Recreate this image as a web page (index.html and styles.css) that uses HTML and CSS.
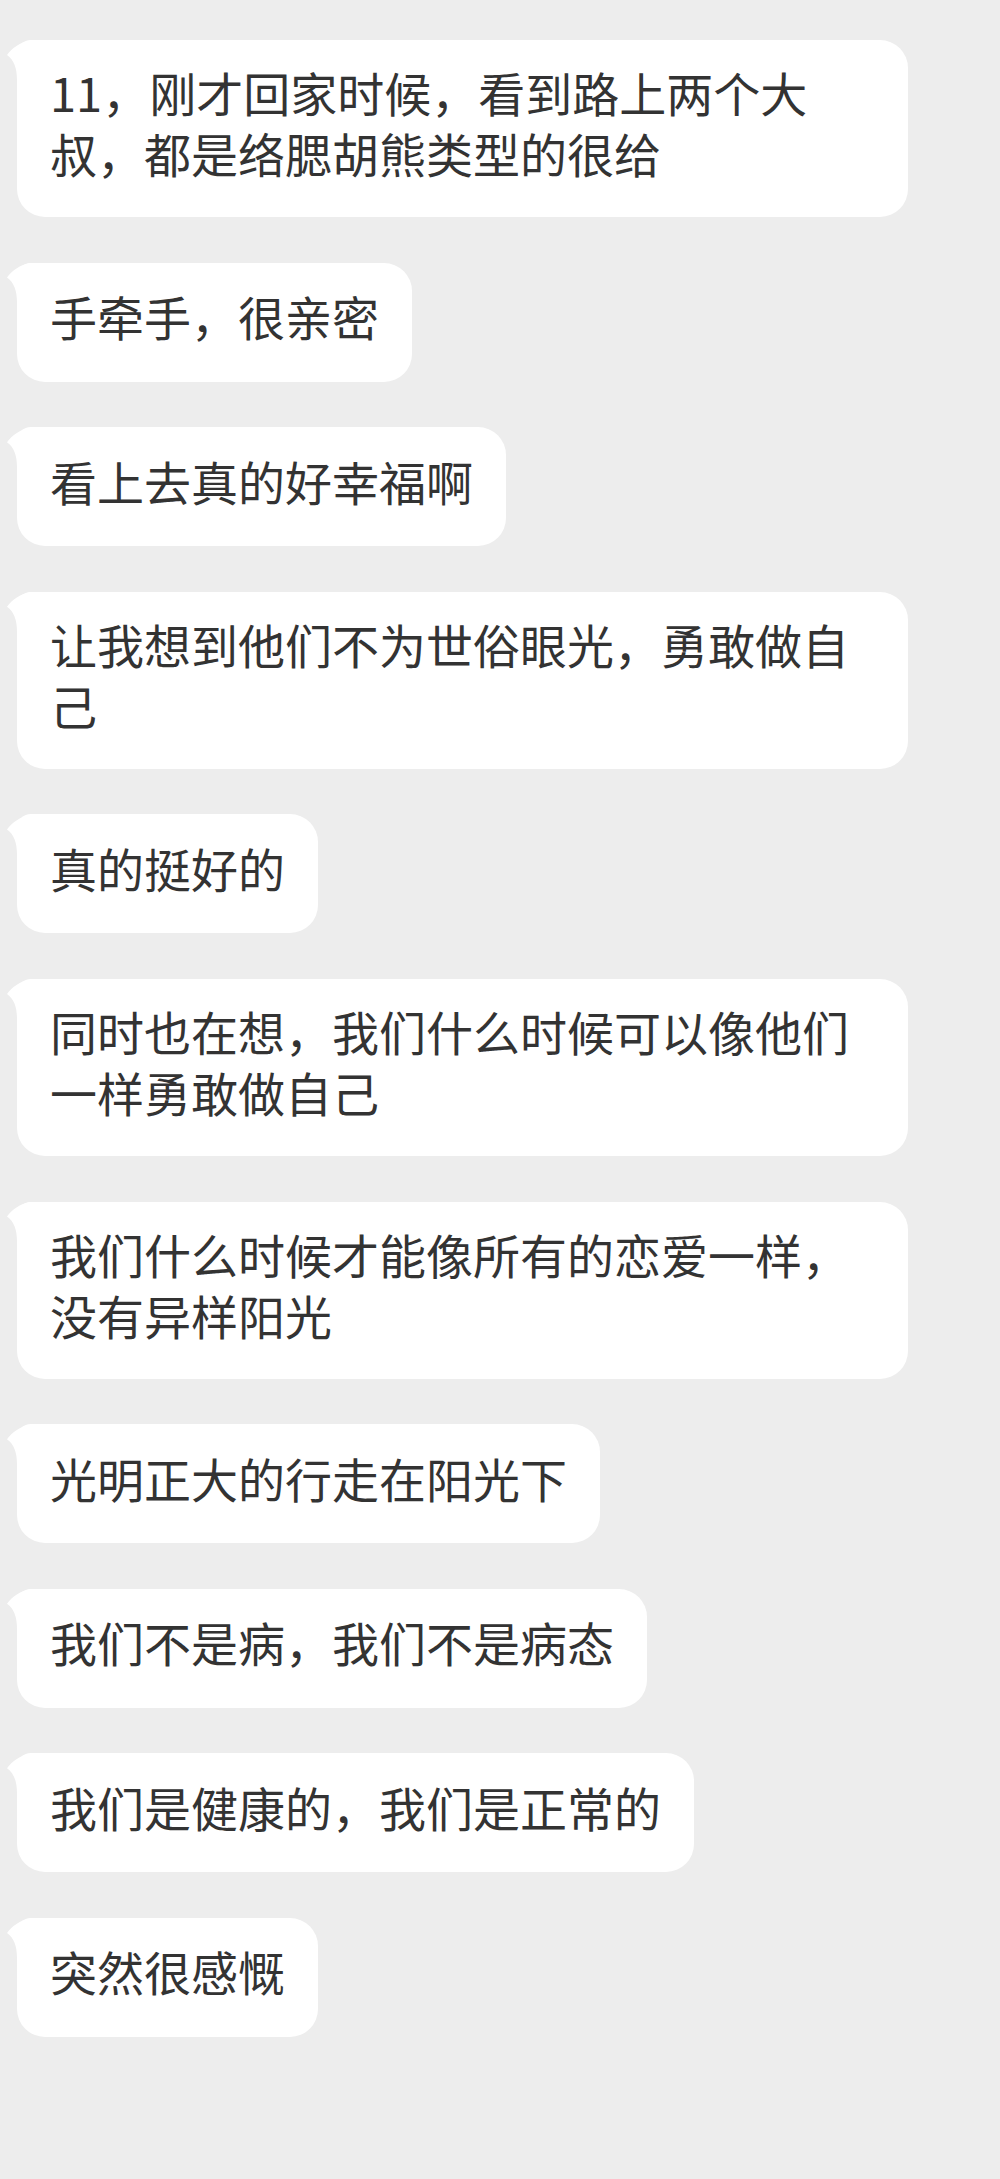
FILE: index.html
```html
<!DOCTYPE html>
<html lang="zh-CN">

<head>
    <meta charset="UTF-8">
    <meta name="viewport" content="width=device-width, initial-scale=1.0">
    <title>聊天记录</title>
    <link rel="stylesheet" href="styles.css">
</head>

<body>

    <!-- Chat messages -->
    <div class="chat">
        <div class="bubble"><p>11，刚才回家时候，看到路上两个大叔，都是络腮胡熊类型的很给</p></div>
        <div class="bubble"><p>手牵手，很亲密</p></div>
        <div class="bubble"><p>看上去真的好幸福啊</p></div>
        <div class="bubble"><p>让我想到他们不为世俗眼光，勇敢做自己</p></div>
        <div class="bubble"><p>真的挺好的</p></div>
        <div class="bubble"><p>同时也在想，我们什么时候可以像他们一样勇敢做自己</p></div>
        <div class="bubble"><p>我们什么时候才能像所有的恋爱一样，没有异样阳光</p></div>
        <div class="bubble"><p>光明正大的行走在阳光下</p></div>
        <div class="bubble"><p>我们不是病，我们不是病态</p></div>
        <div class="bubble"><p>我们是健康的，我们是正常的</p></div>
        <div class="bubble"><p>突然很感慨</p></div>
    </div>

</body>

</html>
```

FILE: styles.css
```css
/* Basic Reset */
* {
    margin: 0;
    padding: 0;
    box-sizing: border-box;
}

html,
body {
    background-color: #ededed;
}

body {
    font-family: "Noto Sans CJK SC", "Noto Sans", sans-serif;
    color: #333;
    min-height: 2179px;
}

/* Message list */
.chat {
    display: flex;
    flex-direction: column;
    align-items: flex-start;
    gap: 45.6px;
    padding: 40px 0 0 17px;
}

.bubble {
    position: relative;
    display: flex;
    align-items: center;
    max-width: 891px;
    min-height: 119px;
    padding: 21px 33px 34px;
    background-color: #fff;
    border-radius: 14px 28px 28px 28px;
}

/* little tail on the top left */
.bubble::before {
    content: "";
    position: absolute;
    left: -11px;
    top: 0;
    width: 40px;
    height: 40px;
    background-color: #fff;
    clip-path: path('M1 15 C 6 8, 14 2, 26 0 L 40 0 L 40 40 L 11 40 C 11 28, 8 20, 1 15 Z');
}

.bubble p {
    position: relative;
    font-size: 47px;
    line-height: 61px;
    font-weight: 400;
}
```
